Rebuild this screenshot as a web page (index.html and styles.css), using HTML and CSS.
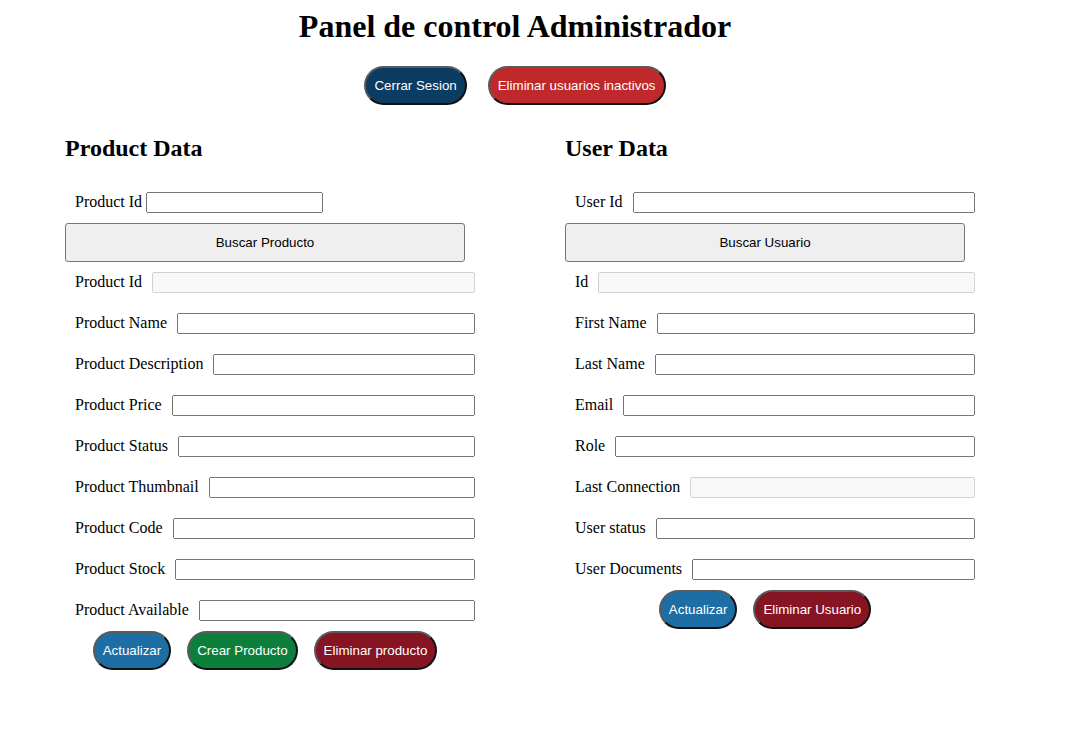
FILE: index.html
```html
<!DOCTYPE html>
<html lang="es">
<head>
<meta charset="utf-8">
<title>Panel de control Administrador</title>
<link rel="stylesheet" href="styles.css">
</head>
<body>
<div class="wrapper">
  <h1 class="title">Panel de control Administrador</h1>
  <div class="top-actions">
    <button class="pill pill-navy">Cerrar Sesion</button>
    <button class="pill pill-red">Eliminar usuarios inactivos</button>
  </div>
  <div class="columns">
    <section class="column">
      <h2 class="col-title">Product Data</h2>
      <div class="row row-search">
        <label>Product Id</label><input type="text" class="search-input">
      </div>
      <button class="search-btn">Buscar Producto</button>
      <div class="row"><label>Product Id</label><input type="text" disabled></div>
      <div class="row"><label>Product Name</label><input type="text"></div>
      <div class="row"><label>Product Description</label><input type="text"></div>
      <div class="row"><label>Product Price</label><input type="text"></div>
      <div class="row"><label>Product Status</label><input type="text"></div>
      <div class="row"><label>Product Thumbnail</label><input type="text"></div>
      <div class="row"><label>Product Code</label><input type="text"></div>
      <div class="row"><label>Product Stock</label><input type="text"></div>
      <div class="row"><label>Product Available</label><input type="text"></div>
      <div class="actions">
        <button class="pill pill-blue">Actualizar</button>
        <button class="pill pill-green">Crear Producto</button>
        <button class="pill pill-wine">Eliminar producto</button>
      </div>
    </section>
    <section class="column">
      <h2 class="col-title">User Data</h2>
      <div class="row"><label>User Id</label><input type="text"></div>
      <button class="search-btn">Buscar Usuario</button>
      <div class="row"><label>Id</label><input type="text" disabled></div>
      <div class="row"><label>First Name</label><input type="text"></div>
      <div class="row"><label>Last Name</label><input type="text"></div>
      <div class="row"><label>Email</label><input type="text"></div>
      <div class="row"><label>Role</label><input type="text"></div>
      <div class="row"><label>Last Connection</label><input type="text" disabled></div>
      <div class="row"><label>User status</label><input type="text"></div>
      <div class="row"><label>User Documents</label><input type="text"></div>
      <div class="actions">
        <button class="pill pill-blue">Actualizar</button>
        <button class="pill pill-wine">Eliminar Usuario</button>
      </div>
    </section>
  </div>
</div>
</body>
</html>
```
FILE: styles.css
```css
body {
  margin: 8px;
  font-family: "Liberation Serif", "Times New Roman", serif;
  font-size: 16px;
  color: #000;
  background: #fff;
}

.wrapper {
  width: 900px;
  margin-left: 57px;
}

.title {
  margin: 0 0 21px;
  font-size: 32px;
  font-weight: bold;
  text-align: center;
}

.top-actions {
  display: flex;
  justify-content: center;
  gap: 21px;
}

.pill {
  font-family: "Liberation Sans", Arial, sans-serif;
  font-size: 13.333px;
  line-height: 17px;
  color: #fff;
  padding: 9px 8px;
  border-width: 2px;
  border-style: solid;
  border-color: #5a5a5a #111 #111 #5a5a5a;
  border-radius: 20px;
  cursor: pointer;
}

.pill-navy { background: #0b3c63; }
.pill-red { background: #c0292c; }
.pill-blue { background: #1c6ea5; }
.pill-green { background: #0c7f3c; }
.pill-wine { background: #861422; }

.columns {
  display: flex;
  gap: 100px;
  margin-top: 30px;
}

.column {
  width: 400px;
}

.col-title {
  margin: 0 0 20px;
  font-size: 24px;
  font-weight: bold;
}

.row {
  display: flex;
  align-items: center;
  gap: 10px;
  width: 400px;
  padding: 10px 0 10px 10px;
}

.row label {
  white-space: nowrap;
  margin-bottom: 2px;
}

.row input {
  flex: 1;
  min-width: 0;
  height: 21px;
  box-sizing: border-box;
  margin: 0;
}

.row-search {
  gap: 4px;
}

.row-search .search-input {
  flex: none;
  width: 177px;
}

.search-btn {
  display: block;
  width: 400px;
  height: 39px;
  margin: 0;
  font-family: "Liberation Sans", Arial, sans-serif;
  font-size: 13.333px;
  color: #000;
  background: #efefef;
  border: 1px solid #767676;
  border-radius: 3px;
}

.actions {
  display: flex;
  justify-content: center;
  gap: 16px;
}
```
